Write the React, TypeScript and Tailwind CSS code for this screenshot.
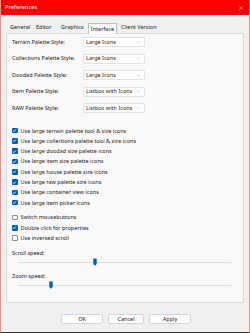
import { ChevronDown, X } from "lucide-react";

const palettes = [
  { label: "Terrain Palette Style:", value: "Large Icons" },
  { label: "Collections Palette Style:", value: "Large Icons" },
  { label: "Doodad Palette Style:", value: "Large Icons" },
  { label: "Item Palette Style:", value: "Listbox with Icons" },
  { label: "RAW Palette Style:", value: "Listbox with Icons" },
];

const bigIcons = [
  "Use large terrain palette tool & size icons",
  "Use large collections palette tool & size icons",
  "Use large doodad size palette icons",
  "Use large item size palette icons",
  "Use large house palette size icons",
  "Use large raw palette size icons",
  "Use large container view icons",
  "Use large item picker icons",
];

const misc = [
  { label: "Switch mousebuttons", on: false },
  { label: "Double click for properties", on: true },
  { label: "Use inversed scroll", on: false },
];

function Check({ on, label }: { on: boolean; label: string }) {
  return (
    <div className="flex items-center h-[10.3px] gap-[3px] whitespace-nowrap">
      {on ? (
        <span className="w-[5.5px] h-[5.5px] rounded-[1px] bg-[#005fb8] flex items-center justify-center">
          <svg viewBox="0 0 10 10" className="w-[5px] h-[5px]">
            <path d="M2 5.2 L4.2 7.3 L8 2.8" fill="none" stroke="white" strokeWidth="1.6" />
          </svg>
        </span>
      ) : (
        <span className="w-[5.5px] h-[5.5px] rounded-[1px] bg-white border-[0.7px] border-[#8a8a8a]" />
      )}
      <span>{label}</span>
    </div>
  );
}

function Slider({ pos }: { pos: number }) {
  return (
    <div className="relative h-[8px] mx-[6px] flex items-center">
      <div className="w-full h-[1.5px] bg-[#dedede] rounded-full" />
      <svg viewBox="0 0 4 8" className="absolute w-[4px] h-[8px]" style={{ left: pos }}>
        <path d="M0.3 0.5 H3.7 V6 L2 7.7 L0.3 6 Z" fill="#0063b1" />
      </svg>
    </div>
  );
}

export default function App() {
  return (
    <div className="w-[250px] h-[333px] bg-[#f0f0f0] border-x border-b border-x-[#e49292] border-b-[#333] flex flex-col text-[5.5px] text-[#1a1a1a] font-['Noto_Sans',sans-serif] select-none">
      <div className="h-[15px] bg-[#ff0000] flex items-center justify-between pl-[4px] pr-[5px] text-white">
        <span className="text-[5.8px]">Preferences</span>
        <X className="w-[6px] h-[6px]" strokeWidth={2} />
      </div>

      <div className="flex items-end h-[18px] pl-[9px] whitespace-nowrap">
        <span className="w-[26px] h-[11px] leading-[11px]">General</span>
        <span className="w-[25px] h-[11px] leading-[11px]">Editor</span>
        <span className="w-[27px] h-[11px] leading-[11px]">Graphics</span>
        <span className="w-[29px] h-[11px] leading-[10px] text-center bg-[#fbfbfb] border-x border-t border-[#bdbdbd] -mb-px relative z-10">Interface</span>
        <span className="h-[11px] leading-[11px] ml-[4px]">Client Version</span>
      </div>

      <div className="mx-[5px] h-[270px] bg-[#f9f9f9] border border-[#dadada] flex flex-col pt-[3px] px-[5px] whitespace-nowrap">
        <div className="flex flex-col gap-[6.5px]">
          {palettes.map((p) => (
            <div key={p.label} className="flex items-center h-[10px]">
              <span className="w-[71px]">{p.label}</span>
              <div className="w-[62px] h-[10px] bg-white border-[0.7px] border-[#e2e2e2] rounded-[1px] flex items-center justify-between pl-[2px] pr-[3px]">
                <span>{p.value}</span>
                <ChevronDown className="w-[5px] h-[5px] text-[#777]" strokeWidth={1.5} />
              </div>
            </div>
          ))}
        </div>

        <div className="flex flex-col mt-[12.5px]">
          {bigIcons.map((t) => (
            <Check key={t} on label={t} />
          ))}
        </div>

        <div className="flex flex-col mt-[4.5px]">
          {misc.map((m) => (
            <Check key={m.label} on={m.on} label={m.label} />
          ))}
        </div>

        <div className="mt-[5px] h-[10px] leading-[10px]">Scroll speed:</div>
        <Slider pos={75} />
        <div className="mt-[5px] h-[10px] leading-[10px]">Zoom speed:</div>
        <Slider pos={31} />
      </div>

      <div className="flex justify-center gap-[5px] mt-[11px] pl-[2px]">
        <button className="w-[42px] h-[10px] bg-[#fdfdfd] border-[0.7px] border-[#d5d5d5] rounded-[2px] text-[5.5px] leading-[9px]">OK</button>
        <button className="w-[36px] h-[10px] bg-[#fdfdfd] border-[0.7px] border-[#d5d5d5] rounded-[2px] text-[5.5px] leading-[9px]">Cancel</button>
        <button className="w-[42px] h-[10px] bg-[#fdfdfd] border-[0.7px] border-[#d5d5d5] rounded-[2px] text-[5.5px] leading-[9px]">Apply</button>
      </div>
    </div>
  );
}
